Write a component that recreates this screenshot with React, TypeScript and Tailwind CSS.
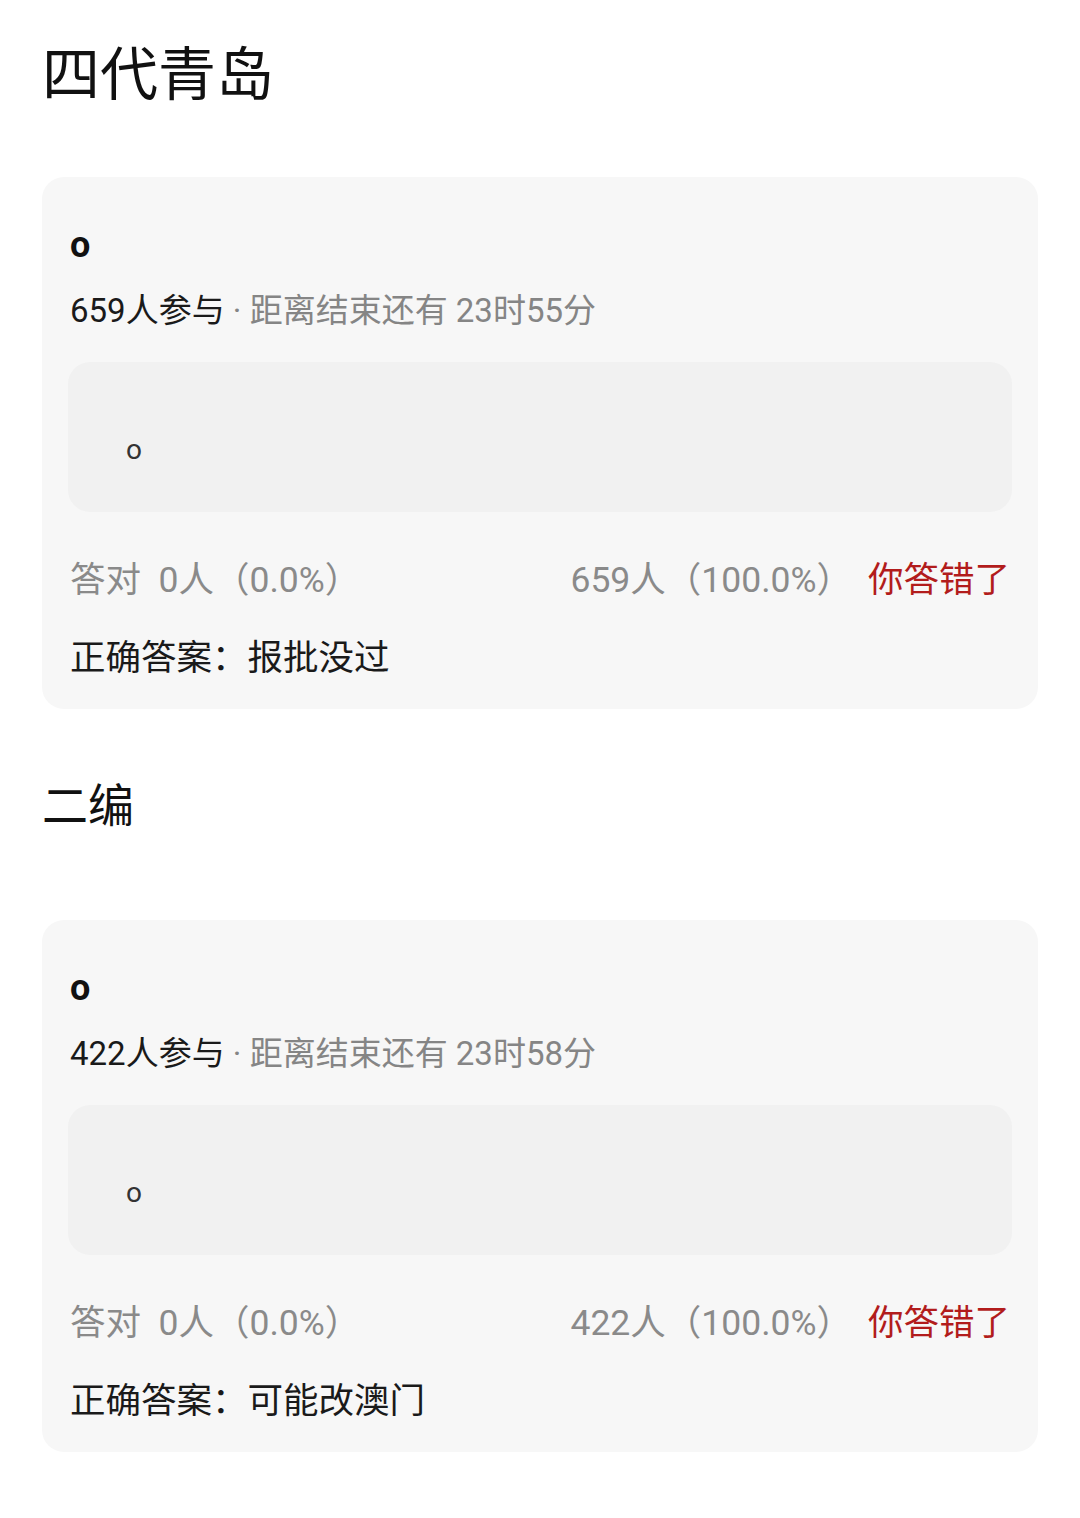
const font = { fontFamily: 'Roboto, "Noto Sans CJK SC", sans-serif' }

type Quiz = {
  joined: string
  remain: string
  wrong: string
  answer: string
}

function QuizCard({ quiz }: { quiz: Quiz }) {
  return (
    <div className="rounded-[22px] bg-[#f7f7f7] pl-[28px] pr-[30px] pt-[46px] pb-[29px]">
      <div className="text-[36px] font-bold leading-[44px] text-[#111]">o</div>
      <div className="mt-[24px] text-[33px] leading-[40px]">
        <span className="text-[#1a1a1a]">{quiz.joined}人参与</span>
        <span className="text-[#858585]"> · 距离结束还有 {quiz.remain}</span>
      </div>
      <div className="mt-[31px] -ml-[2px] mr-[-4px] flex h-[150px] items-center rounded-[22px] bg-[#f1f1f1] pl-[58px]">
        <span className="pt-[26px] text-[28px] leading-none text-[#333]">o</span>
      </div>
      <div className="mt-[46px] flex items-center text-[35.5px] leading-[44px]">
        <span className="text-[#8a8a8a]">答对&nbsp;&nbsp;0人（0.0%）</span>
        <span className="ml-auto text-[#8a8a8a]">{quiz.wrong}人（100.0%）</span>
        <span className="ml-[16px] mr-[-2px] text-[#b21c1c]">你答错了</span>
      </div>
      <div className="mt-[34px] text-[35.5px] leading-[44px] text-[#1a1a1a]">
        正确答案：{quiz.answer}
      </div>
    </div>
  )
}

export default function App() {
  return (
    <div className="min-h-[1518px] w-[1080px] bg-white px-[42px] pt-[42px]" style={font}>
      <h1 className="text-[58px] font-normal leading-[67px] text-[#111]">四代青岛</h1>
      <div className="mt-[68px]">
        <QuizCard quiz={{ joined: '659', remain: '23时55分', wrong: '659', answer: '报批没过' }} />
      </div>
      <h2 className="mt-[71px] text-[46px] font-normal leading-[52px] text-[#111]">二编</h2>
      <div className="mt-[88px]">
        <QuizCard quiz={{ joined: '422', remain: '23时58分', wrong: '422', answer: '可能改澳门' }} />
      </div>
    </div>
  )
}
